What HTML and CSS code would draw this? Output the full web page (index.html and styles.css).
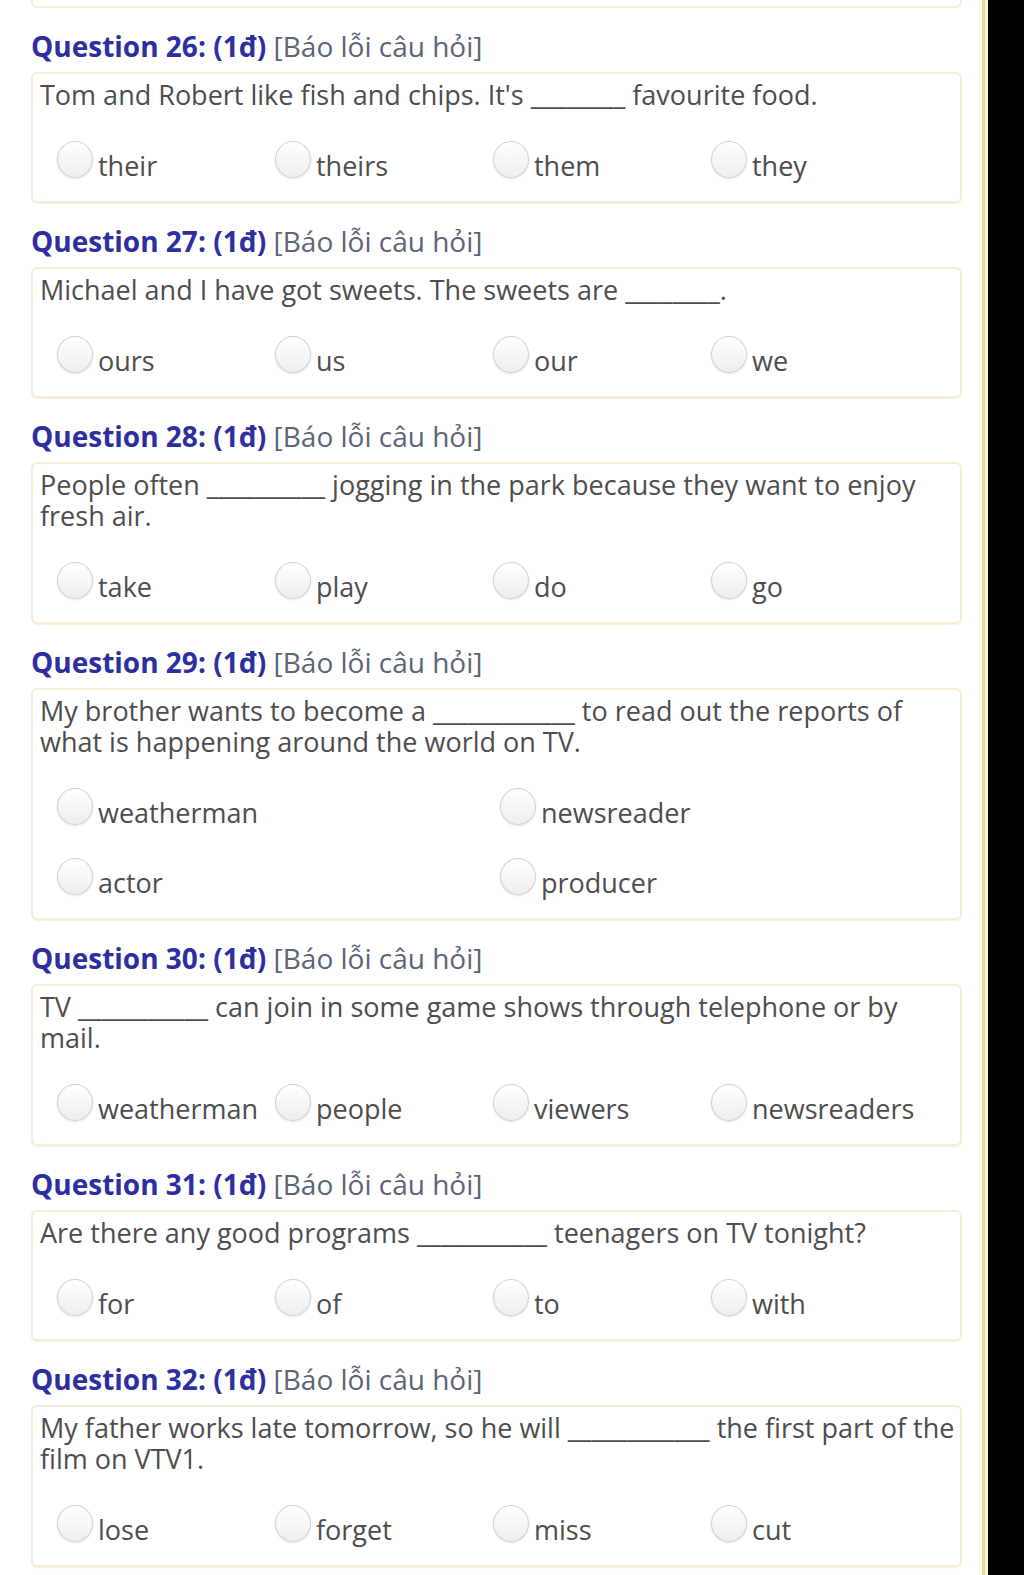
FILE: index.html
```html
<!DOCTYPE html>
<html lang="vi">
<head>
    <meta charset="UTF-8">
    <title>Bài kiểm tra - Tiếng Anh</title>
    <link rel="stylesheet" href="styles.css">
</head>
<body>
<div class="page">
    <div class="card-tail"></div>

    <div class="q-head"><b>Question 26: (1đ)</b> <span class="report">[Báo lỗi câu hỏi]</span></div>
    <div class="card">
        <div class="q-text">Tom and Robert like fish and chips. It's ________ favourite food.</div>
        <div class="options">
            <label class="opt"><span class="radio"></span>their</label>
            <label class="opt"><span class="radio"></span>theirs</label>
            <label class="opt"><span class="radio"></span>them</label>
            <label class="opt"><span class="radio"></span>they</label>
        </div>
    </div>

    <div class="q-head"><b>Question 27: (1đ)</b> <span class="report">[Báo lỗi câu hỏi]</span></div>
    <div class="card">
        <div class="q-text">Michael and I have got sweets. The sweets are ________.</div>
        <div class="options">
            <label class="opt"><span class="radio"></span>ours</label>
            <label class="opt"><span class="radio"></span>us</label>
            <label class="opt"><span class="radio"></span>our</label>
            <label class="opt"><span class="radio"></span>we</label>
        </div>
    </div>

    <div class="q-head"><b>Question 28: (1đ)</b> <span class="report">[Báo lỗi câu hỏi]</span></div>
    <div class="card">
        <div class="q-text">People often __________ jogging in the park because they want to enjoy fresh air.</div>
        <div class="options">
            <label class="opt"><span class="radio"></span>take</label>
            <label class="opt"><span class="radio"></span>play</label>
            <label class="opt"><span class="radio"></span>do</label>
            <label class="opt"><span class="radio"></span>go</label>
        </div>
    </div>

    <div class="q-head"><b>Question 29: (1đ)</b> <span class="report">[Báo lỗi câu hỏi]</span></div>
    <div class="card">
        <div class="q-text">My brother wants to become a ____________ to read out the reports of what is happening around the world on TV.</div>
        <div class="options two">
            <label class="opt"><span class="radio"></span>weatherman</label>
            <label class="opt"><span class="radio"></span>newsreader</label>
            <label class="opt"><span class="radio"></span>actor</label>
            <label class="opt"><span class="radio"></span>producer</label>
        </div>
    </div>

    <div class="q-head"><b>Question 30: (1đ)</b> <span class="report">[Báo lỗi câu hỏi]</span></div>
    <div class="card">
        <div class="q-text">TV ___________ can join in some game shows through telephone or by mail.</div>
        <div class="options">
            <label class="opt"><span class="radio"></span>weatherman</label>
            <label class="opt"><span class="radio"></span>people</label>
            <label class="opt"><span class="radio"></span>viewers</label>
            <label class="opt"><span class="radio"></span>newsreaders</label>
        </div>
    </div>

    <div class="q-head"><b>Question 31: (1đ)</b> <span class="report">[Báo lỗi câu hỏi]</span></div>
    <div class="card">
        <div class="q-text">Are there any good programs ___________ teenagers on TV tonight?</div>
        <div class="options">
            <label class="opt"><span class="radio"></span>for</label>
            <label class="opt"><span class="radio"></span>of</label>
            <label class="opt"><span class="radio"></span>to</label>
            <label class="opt"><span class="radio"></span>with</label>
        </div>
    </div>

    <div class="q-head"><b>Question 32: (1đ)</b> <span class="report">[Báo lỗi câu hỏi]</span></div>
    <div class="card">
        <div class="q-text">My father works late tomorrow, so he will ____________ the first part of the film on VTV1.</div>
        <div class="options">
            <label class="opt"><span class="radio"></span>lose</label>
            <label class="opt"><span class="radio"></span>forget</label>
            <label class="opt"><span class="radio"></span>miss</label>
            <label class="opt"><span class="radio"></span>cut</label>
        </div>
    </div>
</div>
</body>
</html>
```

FILE: styles.css
```css
html, body { margin: 0; padding: 0; background: #000; }
body { font-family: "Open Sans", "Noto Sans", sans-serif; color: #4d4d4d; }
.page { width: 931px; min-height: 1575px; background: #fff; padding: 0 20px 0 31px; border-right: 3px solid #e9de96; box-shadow: 3px 0 0 #f7f2d2; box-sizing: content-box; }
.card-tail { height: 6px; border: 2px solid #f5edd6; border-top: none; border-radius: 0 0 6px 6px; }
.q-head { font-size: 28px; line-height: 34px; margin: 21px 0 9px; color: #5c6478; white-space: nowrap; }
.q-head b { color: #2d2fa0; font-weight: 700; }
.card { border: 2px solid #f5edd6; border-radius: 6px; padding: 5px 3px 7px 7px; box-shadow: 0 1px 1px rgba(235, 205, 160, 0.35); }
.q-text { font-size: 27px; line-height: 31px; }
.options { display: grid; grid-template-columns: repeat(4, 218px); margin: 14px 0 0 17px; }
.options.two { grid-template-columns: repeat(2, 443px); }
.opt { display: flex; align-items: center; height: 70px; font-size: 27px; line-height: 31px; padding-top: 12px; box-sizing: border-box; white-space: nowrap; }
.radio { flex: none; width: 36px; height: 37px; border-radius: 50%; border: 1px solid #d0d0d0; background: linear-gradient(#fff, #eeeeee); box-shadow: 0 1px 2px rgba(0, 0, 0, 0.12); margin: -12px 5px 0 0; box-sizing: border-box; }
```
